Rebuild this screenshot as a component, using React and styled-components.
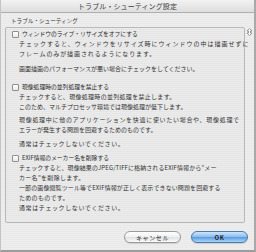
import React from 'react';
import styled, { createGlobalStyle } from 'styled-components';

const Global = createGlobalStyle`
  html, body { margin: 0; padding: 0; }
  body {
    width: 256px; height: 252px; overflow: hidden; background: #ececec;
    font-family: "Noto Sans CJK JP", "Noto Sans", sans-serif;
    color: #2a2a2a;
  }
`;

const Window = styled.div`
  width: 256px; height: 252px; box-sizing: border-box;
  display: flex; flex-direction: column;
  background: repeating-linear-gradient(to bottom, #eeeeee 0 1px, #e9e9e9 1px 2px);
  border-left: 1px solid #c4c4c4;
  border-right: 2px solid #a9a9a9;
  border-bottom: 2px solid #9c9c9c;
`;

const TitleBar = styled.div`
  height: 12px; flex: none;
  background: linear-gradient(#f2f2f2, #dedede);
  border-bottom: 1px solid #b0b0b0;
  display: flex; align-items: center; justify-content: center;
  font-size: 7px; letter-spacing: 0.1px; color: #3a3a3a;
  line-height: 12px;
`;

const Body = styled.div`
  flex: 1; display: flex; flex-direction: column;
  padding: 4px 0 0 4px;
`;

const GroupLabel = styled.div`
  font-size: 5.6px; line-height: 8px; height: 8px;
  padding-left: 6px; color: #333;
`;

const GroupRow = styled.div`
  display: flex; margin-top: 2px;
`;

const GroupBox = styled.div`
  width: 240px; height: 196px; box-sizing: border-box;
  border: 1px solid #b8b8b8; border-radius: 2px;
  background: rgba(0,0,0,0.012);
  padding: 2px 0 0 6px;
  display: flex; flex-direction: column;
`;

const SideIcon = styled.div`
  width: 10px; padding-top: 1px; display: flex; justify-content: center;
`;

const Item = styled.div`
  display: flex; flex-direction: column;
  margin-top: ${p => p.$mt || 0}px;
`;

const CheckRow = styled.label`
  display: flex; align-items: center; gap: 3px;
  height: 8px; font-size: 5.8px; line-height: 8px; color: #2a2a2a;
  white-space: nowrap;
`;

const Box = styled.span`
  width: 7px; height: 7px; box-sizing: border-box; flex: none;
  border: 1px solid #8e8e8e; border-radius: 1px;
  background: linear-gradient(#ffffff, #eaeaea);
  box-shadow: inset 0 1px 0 #fff;
`;

const Para = styled.div`
  padding-left: 7px;
  margin-top: ${p => p.$mt || 0}px;
  font-size: 6px; line-height: 10px;
  letter-spacing: ${p => p.$ls ?? 0.6}px;
  white-space: nowrap; color: #333;
`;

const ButtonRow = styled.div`
  display: flex; justify-content: flex-end; gap: 10px;
  margin-top: 8px; padding-right: 6px;
`;

const Button = styled.div`
  width: 57px; height: 12px; box-sizing: border-box;
  border-radius: 6px;
  display: flex; align-items: center; justify-content: center;
  font-size: 6px; letter-spacing: 0.6px; color: #222;
  border: 1px solid ${p => (p.$primary ? '#4d78a8' : '#9a9a9a')};
  background: ${p =>
    p.$primary
      ? 'linear-gradient(#cfe6fb 0%, #8fc0ee 45%, #5f9ee2 55%, #a8d6fb 100%)'
      : 'linear-gradient(#ffffff 0%, #f2f2f2 45%, #e2e2e2 55%, #fbfbfb 100%)'};
  box-shadow: 0 1px 1px rgba(0,0,0,0.12);
  font-weight: ${p => (p.$primary ? 700 : 400)};
`;

function ResizeIcon() {
  return (
    <svg width="7" height="8" viewBox="0 0 7 8">
      <path d="M3.5 0.5 L6 3 L4.5 3 L4.5 5 L6 5 L3.5 7.5 L1 5 L2.5 5 L2.5 3 L1 3 Z"
        fill="#fafafa" stroke="#777" strokeWidth="0.7" strokeLinejoin="round" />
    </svg>
  );
}

export default function App() {
  return (
    <>
      <Global />
      <Window>
        <TitleBar>トラブル・シューティング設定</TitleBar>
        <Body>
          <GroupLabel>トラブル・シューティング</GroupLabel>
          <GroupRow>
            <GroupBox>
              <Item>
                <CheckRow><Box />ウィンドウのライブ・リサイズをオフにする</CheckRow>
                <Para $mt={1} $ls={1.0}>チェックすると、ウィンドウをリサイズ時にウィンドウの中は描画せずに</Para>
                <Para $ls={0.9}>フレームのみが描画されるようになります。</Para>
                <Para $mt={5} $ls={0}>画面描画のパフォーマンスが悪い場合にチェックをしてください。</Para>
              </Item>
              <Item $mt={9}>
                <CheckRow><Box />現像処理時の並列処理を禁止する</CheckRow>
                <Para $mt={1} $ls={0.3}>チェックすると、現像処理時の並列処理を禁止します。</Para>
                <Para $ls={0}>このため、マルチプロセッサ環境では現像処理が低下します。</Para>
                <Para $mt={3} $ls={0.7}>現像処理中に他のアプリケーションを快適に使いたい場合や、現像処理で</Para>
                <Para $ls={0}>エラーが発生する問題を回避するためのものです。</Para>
                <Para $mt={4} $ls={0.6}>通常はチェックしないでください。</Para>
              </Item>
              <Item $mt={5}>
                <CheckRow><Box />EXIF情報のメーカー名を削除する</CheckRow>
                <Para $mt={1} $ls={0.1}>チェックすると、現像結果のJPEG/TIFFに格納されるEXIF情報から“メー</Para>
                <Para $ls={0.3}>カー名”を削除します。</Para>
                <Para $ls={0.1}>一部の画像閲覧ツール等でEXIF情報が正しく表示できない問題を回避する</Para>
                <Para $ls={0.3}>ためのものです。</Para>
                <Para $ls={0.6}>通常はチェックしないでください。</Para>
              </Item>
            </GroupBox>
            <SideIcon><ResizeIcon /></SideIcon>
          </GroupRow>
          <ButtonRow>
            <Button>キャンセル</Button>
            <Button $primary>OK</Button>
          </ButtonRow>
        </Body>
      </Window>
    </>
  );
}
